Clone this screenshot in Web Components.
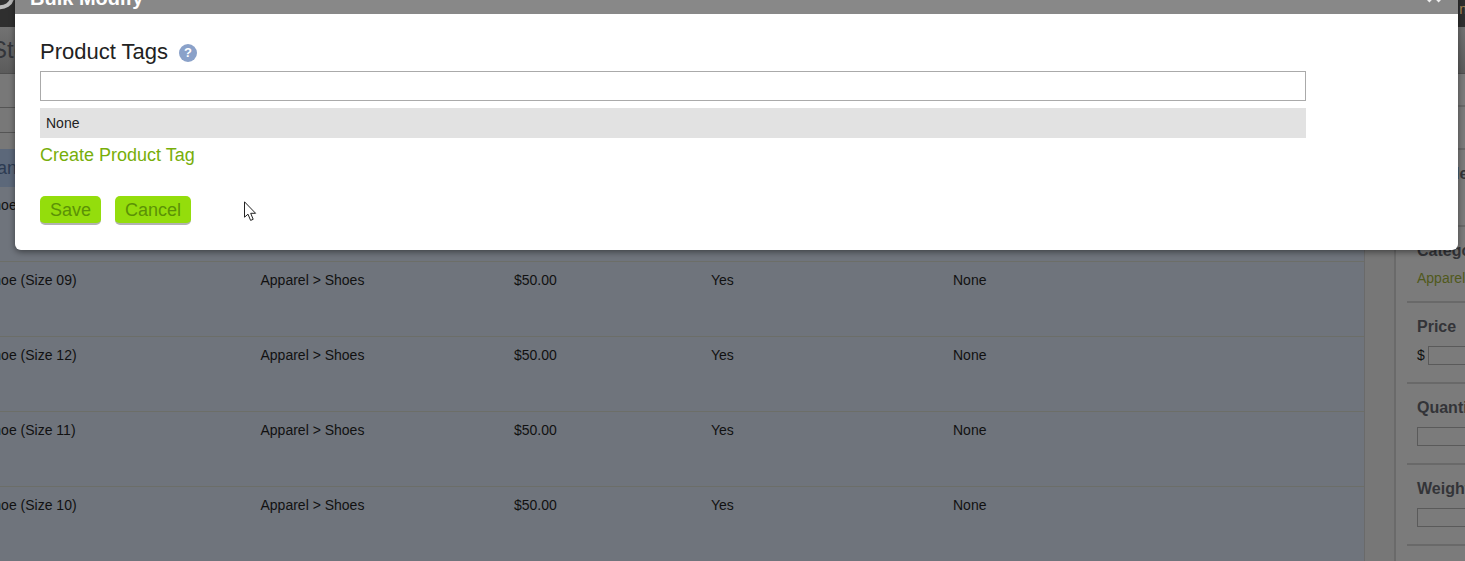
<!DOCTYPE html>
<html lang="en">
<head>
<meta charset="utf-8">
<title>Bulk Modify</title>
<style>
html,body{margin:0;padding:0;height:561px;overflow:hidden;background:#6f747c;font-family:"Liberation Sans",Arial,sans-serif;}
</style>
</head>
<body>
<bg-page>
  <prod-row slot="rows" name="Shoe (Size 09)"></prod-row>
  <prod-row slot="rows" name="Shoe (Size 12)"></prod-row>
  <prod-row slot="rows" name="Shoe (Size 11)"></prod-row>
  <prod-row slot="rows" name="Shoe (Size 10)"></prod-row>
  <side-section slot="side" h="33"></side-section>
  <side-section slot="side" h="43"></side-section>
  <side-section slot="side" h="77" label="Visible"></side-section>
  <side-section slot="side" h="76" label="Category"><span style="color:#50591c;font-size:14px">Apparel</span></side-section>
  <side-section slot="side" h="81" label="Price"><span style="font-size:14px;color:#111;margin-right:3px;position:relative;top:1px">$</span><side-input></side-input></side-section>
  <side-section slot="side" h="81" label="Quantity"><side-input></side-input></side-section>
  <side-section slot="side" h="81" label="Weight"><side-input></side-input></side-section>
</bg-page>
<modal-dialog heading="Bulk Modify">
  <tag-field label="Product Tags" value="None" create="Create Product Tag"></tag-field>
  <div slot="actions" style="display:flex;gap:14px">
    <green-btn>Save</green-btn>
    <green-btn>Cancel</green-btn>
  </div>
</modal-dialog>
<mouse-cursor></mouse-cursor>
<script>
function def(name, html, init){
  customElements.define(name, class extends HTMLElement{
    constructor(){super();this.attachShadow({mode:'open'}).innerHTML=html;}
    connectedCallback(){if(init)init(this,this.shadowRoot);}
  });
}
def('bg-page',`<style>
:host{display:block;width:1465px;height:561px;overflow:hidden;color:#111;font:14px "Liberation Sans",Arial,sans-serif}
.top{height:27px;background:#2f2f2f;display:flex;justify-content:space-between;overflow:hidden}
.top svg{display:block}
.top span{color:#a98a5a;font-size:14px;line-height:18px;margin-right:-2px}
.nav{height:46px;box-sizing:content-box;background:linear-gradient(#727272,#5b5b5b);border-bottom:1px solid #4f4f4f;font-size:24px;line-height:46px;color:#33353a;overflow:hidden}
.nav span{display:block;margin-left:-9px}
.body{display:grid;grid-template-columns:1364px 32px 1fr;height:487px}
.left{background:#6f747c;overflow:hidden}
.sub{background:#787878;border-bottom:1px solid #555;box-sizing:border-box}
.gap{height:16px;background:#787878}
.blue{height:38px;background:#5c687a;color:#2c3b52;font-size:18px;line-height:38px;text-indent:-3px}
.first{height:74px;padding-top:9px;box-sizing:border-box;line-height:18px}
.gut{background:#777;border-left:1px solid #6a6a6a;border-right:2px solid #6a6a6a;box-sizing:border-box}
.side{background:#7b7b7b;padding-left:11px;overflow:hidden}
</style>
<div class="top"><svg width="20" height="14" viewBox="0 0 20 14"><path d="M-2 7A12 10 0 0 0 12 -2" fill="none" stroke="#b9b9b9" stroke-width="4"/></svg><span>n</span></div>
<div class="nav"><span>Sto</span></div>
<div class="body">
  <div class="left">
    <div class="sub" style="height:34px"></div>
    <div class="sub" style="height:25px"></div>
    <div class="gap"></div>
    <div class="blue">an</div>
    <div class="first"><span style="margin-left:-16px">Shoe</span></div>
    <slot name="rows"></slot>
  </div>
  <div class="gut"></div>
  <div class="side"><slot name="side"></slot></div>
</div>`);
def('prod-row',`<style>
:host{display:grid;grid-template-columns:276.5px 253.5px 197px 242px 1fr;height:75px;margin-left:-16px;box-sizing:border-box;border-top:1px solid #6c6e68;padding-top:9px;line-height:18px;font-size:14px;color:#111}
</style><div id="n"></div><div>Apparel &gt; Shoes</div><div>$50.00</div><div>Yes</div><div>None</div>`,
(h,s)=>{s.getElementById('n').textContent=h.getAttribute('name');});
def('side-section',`<style>
:host{display:block;box-sizing:border-box;border-bottom:2px solid #696969;padding:15px 0 0 10px;white-space:nowrap}
.l{display:block;font-weight:bold;font-size:16px;line-height:18px;color:#333438;margin-bottom:10px}
</style><span class="l" id="l"></span><slot></slot>`,
(h,s)=>{h.style.height=h.getAttribute('h')+'px';const l=h.getAttribute('label');const e=s.getElementById('l');if(l)e.textContent=l;else e.remove();});
def('side-input',`<style>
:host{display:inline-block;vertical-align:middle;box-sizing:border-box;width:70px;height:19px;border:1px solid #5a5a5a;background:#7b7b7b}
</style>`);
def('modal-dialog',`<style>
:host{position:absolute;left:15px;top:-32px;width:1443px;display:block;z-index:2;border-radius:6px;box-shadow:0 2px 6px rgba(0,0,0,.45);overflow:hidden}
header{height:46px;box-sizing:border-box;background:#888;color:#fff;font-weight:bold;font-size:20px;line-height:24px;padding:18px 15px 0;position:relative}
svg{position:absolute;right:15px;top:18px}
main{background:#fff;padding:25px 25px 25px;height:236px;box-sizing:border-box}
.act{margin-top:30px}
</style>
<header><span id="t"></span><svg width="18" height="18" viewBox="0 0 18 18"><path d="M3 3L15 15M15 3L3 15" stroke="#eee" stroke-width="4"/></svg></header>
<main><slot></slot><div class="act"><slot name="actions"></slot></div></main>`,
(h,s)=>{s.getElementById('t').textContent=h.getAttribute('heading');});
def('tag-field',`<style>
:host{display:block;width:1266px;font-family:"Liberation Sans",Arial,sans-serif}
.h{display:flex;align-items:center;gap:11px;height:26px;margin-bottom:6px;font-size:22px;line-height:26px;color:#222}
.in{height:30px;box-sizing:border-box;border:1px solid #aaa;background:#fff;display:block;width:100%;margin:0;padding:0;outline:0}
.none{margin-top:7px;height:30px;background:#e2e2e2;font-size:14px;line-height:30px;padding-left:6px;color:#222}
.c{display:block;margin-top:6px;font-size:18px;line-height:22px;color:#78ae0a}
</style>
<div class="h"><span id="l"></span><help-icon></help-icon></div>
<input class="in" type="text" aria-label="Product Tags">
<div class="none" id="v"></div>
<span class="c" id="c"></span>`,
(h,s)=>{s.getElementById('l').textContent=h.getAttribute('label');s.getElementById('v').textContent=h.getAttribute('value');s.getElementById('c').textContent=h.getAttribute('create');});
def('help-icon',`<style>
:host{display:inline-flex;width:18px;height:18px;border-radius:50%;background:#8aa1c9;color:#fff;font:bold 13px/18px "Liberation Sans",Arial,sans-serif;align-items:center;justify-content:center;margin-top:2px}
</style>?`);
def('green-btn',`<style>
:host{display:inline-block;box-sizing:border-box;height:29px;padding:0 10px;background:#94dd0c;color:#5b9206;font:18px/28px "Liberation Sans",Arial,sans-serif;border-radius:5px;border-bottom:2px solid #b2b2b2}
</style><slot></slot>`);
def('mouse-cursor',`<style>
:host{position:absolute;left:244px;top:201px;width:14px;height:21px;z-index:3;display:block}
svg{display:block}
</style><svg width="14" height="21" viewBox="0 0 14 21"><path d="M.5.8V16.2L4 13.2 6.6 19.4 9.2 18.3 6.7 12.3H11.6Z" fill="#fff" stroke="#222" stroke-width="1"/></svg>`);
</script>
</body>
</html>
